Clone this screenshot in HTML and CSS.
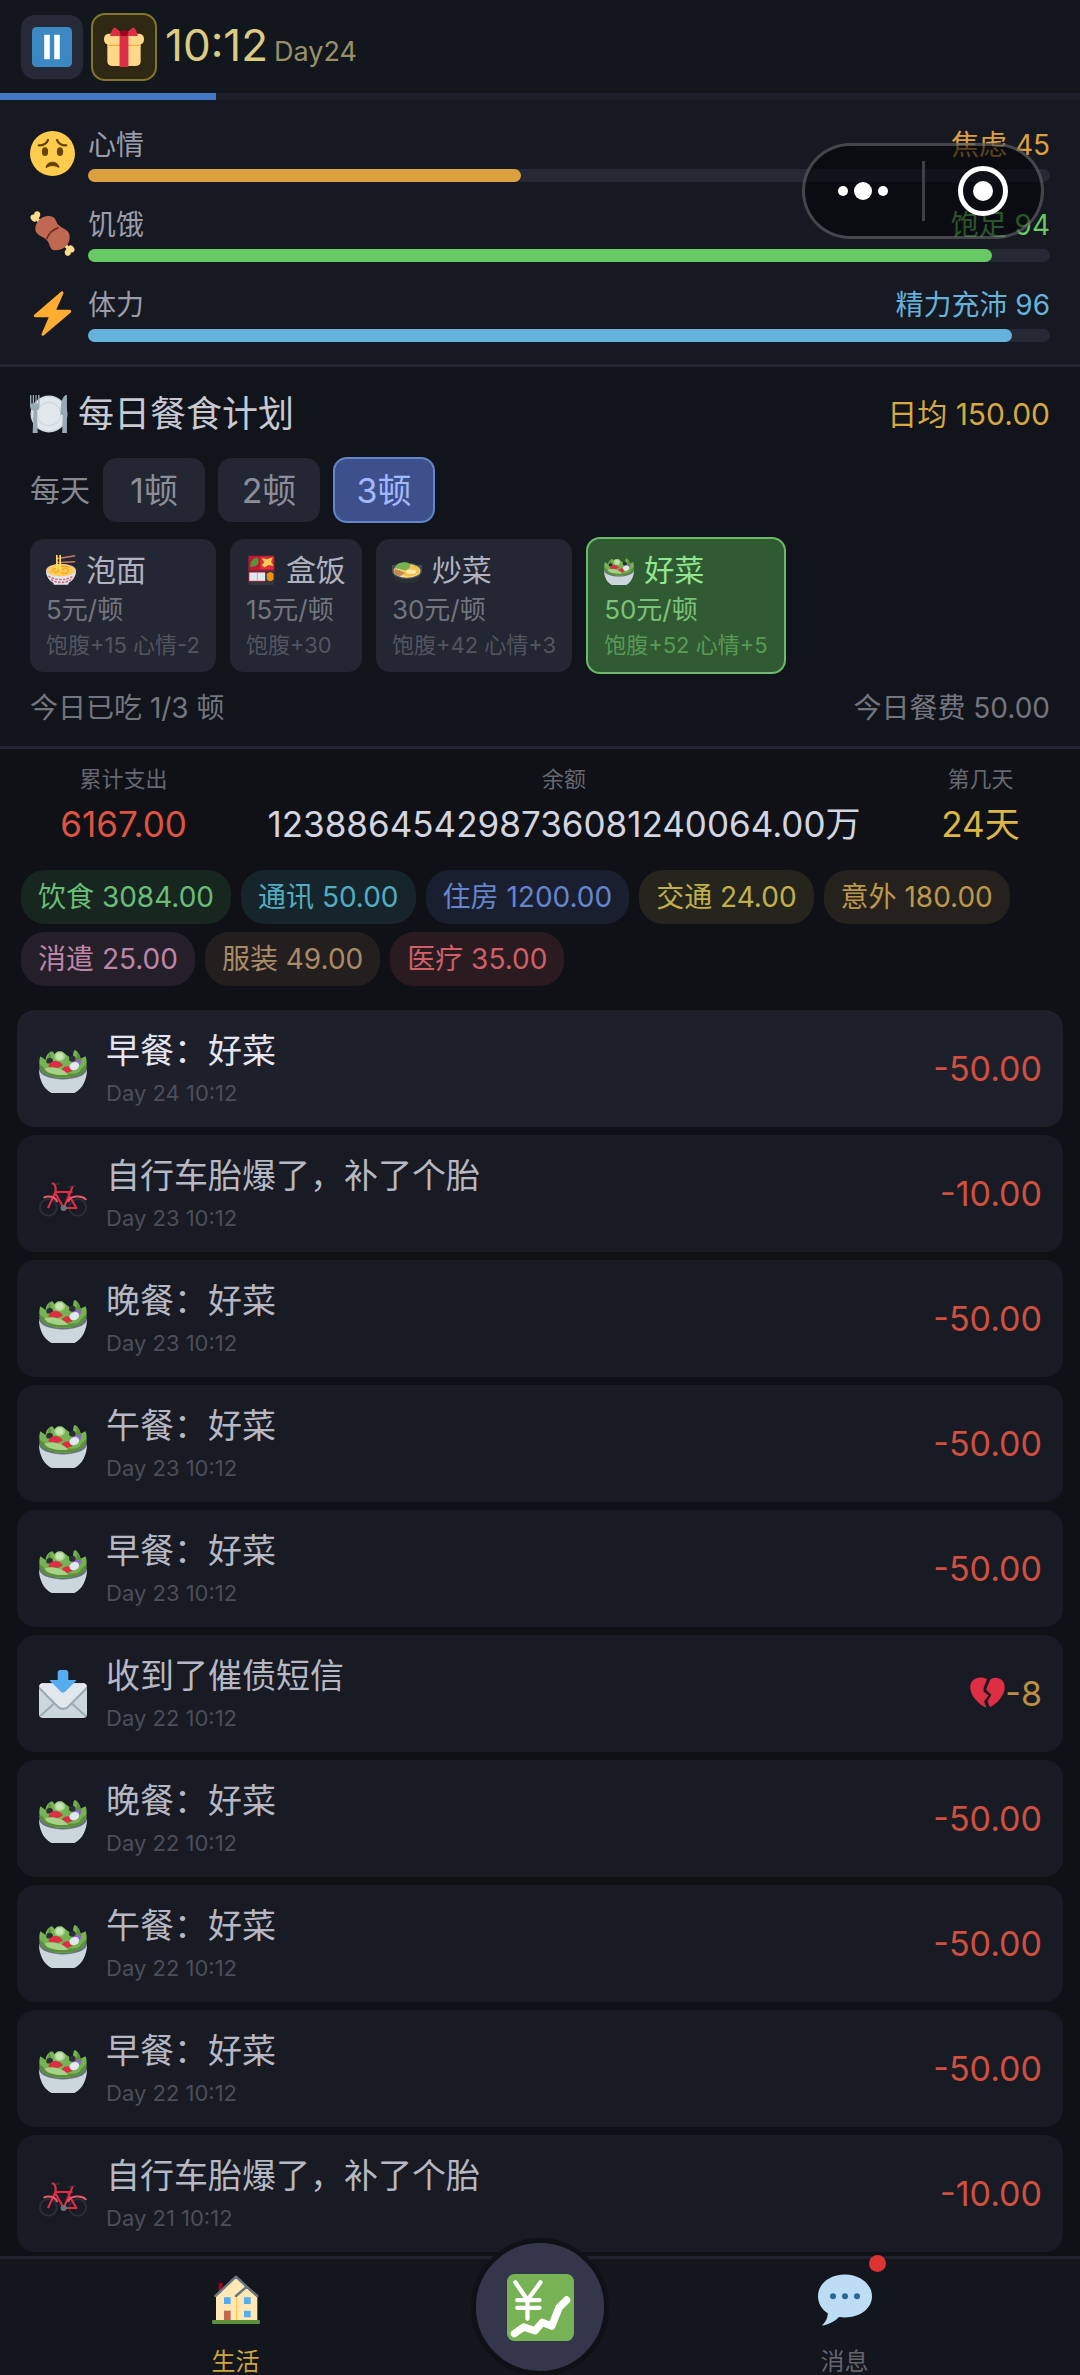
FILE: index.html
```html
<!DOCTYPE html>
<html lang="zh-CN">
<head>
<meta charset="utf-8">
<meta name="viewport" content="width=device-width, initial-scale=1">
<title>生活</title>
<link rel="stylesheet" href="styles.css">
</head>
<body>
<svg class="sprite" aria-hidden="true">
  <symbol id="i-pause" viewBox="0 0 36 36">
    <rect width="36" height="36" rx="4" fill="#3b88c3"/>
    <rect x="11" y="7" width="5" height="22" fill="#fff"/><rect x="20" y="7" width="5" height="22" fill="#fff"/>
  </symbol>
  <symbol id="i-gift" viewBox="0 0 36 36">
    <path fill="#fdd888" d="M33 31c0 2.200-1.800 4-4 4H7c-2.200 0-4-1.800-4-4V14h30z"/>
    <rect x="0" y="6" width="36" height="10" rx="4.500" fill="#fdd888"/>
    <path fill="#fcab40" d="M3 16h30v1H3z"/>
    <path fill="#da2f47" d="M14 5h8v31h-8z"/>
    <path fill="#da2f47" d="M18 7L10 .5C8.500-.5 6 5 5.500 8H14zM18 7l8-6.500C27.500-.5 30 5 30.500 8H22z"/>
    <path fill="#a0041e" d="M14 4.500q4-3 8 0L21 8h-6z"/>
  </symbol>
  <symbol id="i-face" viewBox="0 0 36 36">
    <circle cx="18" cy="18" r="18" fill="#ffcc4d"/>
    <ellipse cx="12" cy="16.500" rx="2.500" ry="3.500" fill="#664500"/><ellipse cx="24" cy="16.500" rx="2.500" ry="3.500" fill="#664500"/>
    <path fill="#664500" d="M23.500 28.600C23.400 28.300 22.300 24.500 18 24.500s-5.400 3.800-5.500 4.100c-.2.700.4 1.200 1 .8C14 29.100 15.500 28 18 28s4 1.100 4.500 1.400c.6.400 1.200-.2 1-.8z"/>
    <path fill="none" stroke="#664500" stroke-width="1.800" stroke-linecap="round" d="M7 11.500c3.500.1 6.200-1.400 7.400-4.300M29 11.500c-3.500.1-6.200-1.400-7.400-4.300"/>
  </symbol>
  <symbol id="i-meat" viewBox="0 0 36 36">
    <path stroke="#ffdc8d" stroke-width="3" d="M4 5l28 26"/>
    <path fill="#ffdc8d" d="M.7 6.200C-.4 4.200 1.400 2.300 3.300 3 3 .8 5.300-.5 7 .5c1.700 1 1.300 3.200.7 4.200L4.600 8.300C3.300 9 1.500 8 .7 6.200zM35.300 29.800c1.100 2-.7 3.900-2.600 3.200.3 2.200-2 3.500-3.700 2.500-1.700-1-1.300-3.200-.7-4.200l3.100-3.600c1.300-.7 3.100.3 3.900 2.100z"/>
    <path fill="#bf6952" d="M6.500 8C9 4.500 14 3 18 4.500c2.600 1 2.600 3.700 4.500 6.300 2.300 3 7 3.500 8.500 6.700 1.300 3 .8 7-1.500 9.800-2.500 3-6.800 4.500-10.500 4-3-.5-3-4.500-4.800-7.200C12 21 6.700 20 5 17c-1.600-3-.4-6.500 1.500-9z"/>
    <path d="M13.500 22c1.500-4 4.500-7 9-8.500" stroke="#6f2b22" stroke-width="1.300" fill="none" stroke-linecap="round"/>
  </symbol>
  <symbol id="i-bolt" viewBox="0 0 36 36">
    <path fill="#ffac33" d="M32.900 15.700c-.2-.5-.6-.8-1.100-.8H21L26.700 1.900c.2-.5.1-1.100-.4-1.400-.5-.4-1.100-.3-1.500.1L3.400 18.900c-.3.300-.5.800-.3 1.300.2.400.6.700 1.100.7H15L9.300 34.100c-.2.500-.1 1.100.4 1.400.4.300 1 .3 1.500-.1l21.400-18.300c.3-.4.500-.9.300-1.400z"/>
  </symbol>
  <symbol id="i-plate" viewBox="0 0 36 36">
    <circle cx="18" cy="18" r="17.500" fill="#ccd6dd"/><circle cx="18" cy="18" r="16" fill="#e1e8ed"/>
    <circle cx="18" cy="18" r="11" fill="#e1e8ed" stroke="#ccd6dd" stroke-width="1"/>
    <path fill="#99aab5" d="M0 0h1.300v8h1.300V0h1.200v8h1.300V0h1.200v8h1.300V0H9v10c0 3-1 4-2.500 5l.8 21H2.500l.8-21C1 14 0 13 0 10zM34 0c-4 2-5 8-5 19h2l-.5 17H35V0z"/>
  </symbol>
  <symbol id="i-noodle" viewBox="0 0 36 36">
    <path stroke="#c97c62" stroke-width="1.800" d="M13 4.500L35 1M13 9l22-1"/>
    <ellipse cx="18" cy="19" rx="18" ry="8.500" fill="#f4c7b3"/>
    <path fill="#e1e8ed" d="M0 19c0 7 4 12 9 14.500V35c0 1 18 1 18 0v-1.500C32 31 36 26 36 19c-3 9-33 9-36 0z"/>
    <path stroke="#dd6b80" stroke-width="2" stroke-dasharray="3 1.500" fill="none" d="M3 25c7 6 23 6 30 0M6 29.500c7 4.500 17 4.500 24 0"/>
    <ellipse cx="18" cy="18.500" rx="15.500" ry="7" fill="#ffcc4d"/>
    <path fill="none" stroke="#f19020" stroke-width="1.200" d="M7 20c0-5 9-4 8-1s-6 2-5 0M18 21c6 3 11-1 8-4s-8 0-5 2M17 14c3-1 8-1 11 1"/>
    <path stroke="#ffdc5d" stroke-width="2" d="M13 0v18M17 0v18"/>
  </symbol>
  <symbol id="i-bento" viewBox="0 0 36 36">
    <rect x="3" y="3" width="31" height="33" rx="2" fill="#31373d"/>
    <path fill="#be1931" d="M3 1h31v18H3zM3 20h20v12H3z"/><path fill="#dd2e44" d="M17 2h16v15H17z"/>
    <path fill="#e1e8ed" d="M4 21h19v10H4z"/><path fill="#99aab5" d="M13 21h1v10h-1z"/>
    <path fill="#5c913b" d="M5 14c0-7 4-11 9-11 3 5 1 12-9 11z"/>
    <path fill="#ffcc4d" d="M19 4l6 1 7-2-2 5 3 5-6-1-5 3-3-3 3-3z"/>
    <path fill="#f4900c" d="M25 23c2-3 6-3 8 0v6c-2 3-6 3-8 0z"/>
  </symbol>
  <symbol id="i-pan" viewBox="0 0 36 36">
    <g transform="translate(0 5) scale(1 .88)">
    <path fill="#292f33" d="M1 17h34c0 9-4 16-10 16H11C5 33 1 26 1 17z"/>
    <path fill="#414b51" d="M0 8h5v6H0zM31 8h5v6h-5z"/>
    <ellipse cx="18" cy="16" rx="18" ry="11" fill="#4b575f"/>
    <ellipse cx="18" cy="16" rx="16" ry="9.500" fill="#ffd983"/>
    <path fill="#f4c04e" d="M16 11c6-5 18-2 17 5s-17 9-19 6z"/>
    <path fill="#c1894f" d="M3 14c3-1 6 2 12 4-1 4-5 6-9 4-3-2-4-5-3-8z"/>
    <path fill="#77b255" d="M4 10C7 4 16 3 21 6c2 4 0 8-5 9C12 16 7 12 4 13z"/>
    <ellipse cx="23" cy="17" rx="6" ry="3" fill="#ffe8b6"/>
    </g>
  </symbol>
  <symbol id="i-salad" viewBox="0 0 36 36">
    <g transform="translate(0 2) scale(1 .92)">
    <path fill="#77b255" d="M1 18C0 13 0 10 1 7l4 3c0-4 3-7 5-7l3 4 4-4 5 4 4 3c-1-4 0-8 1-8 3 2 4 5 4 7l4-2c1 3 1 7 0 11-5 10-30 9-34 0z"/>
    <path fill="#5c913b" d="M8 4c1 3 2 6 1 10l-3-4zM28 2c1 4 0 8-2 10l3 4 3-6zM1 14l7 6 20 1 7-7v5l-5 5H6l-5-5z"/>
    <circle cx="8" cy="11" r="2.500" fill="#292f33"/><circle cx="25" cy="9" r="2.500" fill="#292f33"/>
    <path fill="#77b255" d="M5 13h26v8H5z"/>
    <circle cx="15.500" cy="7" r="4" fill="#a6d388"/><circle cx="15.500" cy="7" r="2.700" fill="#c6e5b3"/>
    <path fill="#dd2e44" d="M7 15.500c1-5.500 8-6.500 11-1l-4 2zM17 18c2-4 7-4 8 1l-5 2z"/>
    <path fill="#9266cc" d="M24 14c2-4 6-5 8-2.500l-2 4z"/><ellipse cx="26.500" cy="15" rx="3.800" ry="3.200" fill="#e1e8ed" transform="rotate(-30 26.500 15)"/>
    <path fill="#a6d388" d="M4 17c6-2 14 0 18 5-7 1-15 0-18-5z"/>
    <path fill="none" stroke="#5c913b" stroke-width="2" d="M1 15c3 11.500 31 11.500 34 0"/>
    <path fill="none" stroke="#66757f" stroke-width="1.500" d="M.5 17c3 11.500 32 11.500 35 0"/>
    <path fill="#ccd6dd" d="M0 18c3 10.500 33 10.500 36 0 0 9-5 20-14 20h-8C5 38 0 27 0 18z"/>
    </g>
  </symbol>
  <symbol id="i-bike" viewBox="0 0 36 36">
    <g transform="translate(0 3)">
    <circle cx="7" cy="25" r="6.300" fill="none" stroke="#292f33" stroke-width="1.500"/><circle cx="29" cy="25" r="6.300" fill="none" stroke="#292f33" stroke-width="1.500"/>
    <path fill="none" stroke="#292f33" stroke-width="1.500" stroke-linecap="round" d="M9 7l3 1 3-1M22 10l5-1"/>
    <path fill="none" stroke="#dd2e44" stroke-width="1.600" stroke-linecap="round" stroke-linejoin="round" d="M10.500 7c2 1 2 3 2 6L7 25M12 13.500h12.500M12 14l6.500 11.500L25 10M22 15l6 10.500H18.500"/>
    <path fill="none" stroke="#ea596e" stroke-width="1.500" stroke-linecap="round" d="M4 17.500c3-1.500 8-.5 9.500 3M22 20.500c1-4 10-5 13-1.500"/>
    <circle cx="18.500" cy="25.500" r="2.300" fill="#66757f"/>
    </g>
  </symbol>
  <symbol id="i-mail" viewBox="0 0 36 36">
    <rect y="10" width="36" height="26" rx="3" fill="#ccd6dd"/>
    <path fill="none" stroke="#99aab5" stroke-width="1.500" d="M1 34.500l11-10M35 34.500l-11-10"/>
    <path fill="#99aab5" d="M0 12l14.500 15c2 2 5 2 7 0L36 12v2.500L22 28.500c-2.200 2-5.800 2-8 0L0 14.500z"/>
    <path fill="#e1e8ed" d="M3 10h30c2 0 3 1.500 2.500 2.500L21.500 26.500c-2 2-5 2-7 0L.5 12.500C0 11.500 1 10 3 10z"/>
    <path fill="#55acee" d="M14 2c0-1.200.8-2 2-2h4c1.200 0 2 .8 2 2v5.500h5c1 0 1 .5.500 1L20 16c-1.300 1.300-2.700 1.300-4 0L8.500 8.500C8 8 8 7.500 9 7.500h5z"/>
  </symbol>
  <symbol id="i-broken" viewBox="0 0 36 36">
    <path fill="#dd2e44" d="M14 12l3.500-8.500C14 .5 6 1 2.800 4.500-2 10 .5 18 5 23.500c4 5 8.500 8 12 9.500l-2.500-7 4.500-6-5-4zM20.500 4C24 .500 31 1.500 33.800 5.500 38 12 34.500 19 31 23.500c-4 5-7.500 7.500-10.500 8.500L18 26l4-6.500-5.500-5.500z"/>
  </symbol>
  <symbol id="i-house" viewBox="0 0 36 38">
    <path fill="#a0041e" d="M5 6h3v9H5z"/>
    <path fill="#ffe8b6" d="M3 15L18 1l9 10 7 6v17H3z"/>
    <path fill="#ffcc4d" d="M18 17h1v17h-1z"/>
    <path fill="none" stroke="#66757f" stroke-width="1.800" stroke-linejoin="round" stroke-linecap="round" d="M2.500 16L18 1.500l8 7.500M18 16l8-7 8 7"/>
    <path fill="#55acee" d="M9 17h5v5H9zM24 17h5v5h-5zM24 27h5v5h-5z"/><path fill="#c1694f" d="M9 27h5v8H9z"/>
    <rect y="34" width="36" height="3" rx="1" fill="#5c913b"/>
  </symbol>
  <symbol id="i-chart" viewBox="0 0 36 36">
    <rect width="36" height="36" rx="4" fill="#77b255"/>
    <path fill="none" stroke="#fff" stroke-width="2.300" stroke-linecap="round" stroke-linejoin="round" d="M4.500 4.500L11 14l7-9.500M11 14v10M5.500 14h12M5.500 18.200h12"/>
    <path fill="none" stroke="#fff" stroke-width="4" stroke-linecap="round" stroke-linejoin="round" d="M4 32l5-3.500 6 2L19 26l5 2 4-10 4-4"/>
  </symbol>
  <symbol id="i-chat" viewBox="0 0 36 36">
    <path fill="#bdddf4" d="M18 1C8 1 0 7 0 15.500c0 4.700 2.500 8.700 6.500 11.400C6.500 30 5 33 2.500 35c4.500-.5 9-3 11.500-5.700 1.300.2 2.600.3 4 .3 10 0 18-6 18-14.100S28 1 18 1z"/>
    <circle cx="10" cy="15.500" r="2" fill="#2a6797"/><circle cx="18" cy="15.500" r="2" fill="#2a6797"/><circle cx="26" cy="15.500" r="2" fill="#2a6797"/>
  </symbol>
</svg>

<header class="topbar">
  <button class="tool" type="button" aria-label="暂停"><svg class="tool-icon"><use href="#i-pause"/></svg></button>
  <button class="tool tool-gift" type="button" aria-label="礼物"><svg class="tool-icon"><use href="#i-gift"/></svg></button>
  <div class="clock"><span class="time">10:12</span><span class="day">Day24</span></div>
</header>
<div class="dayline"><div class="dayline-fill" style="width:20%"></div></div>

<div class="capsule">
  <button class="cap-btn" type="button" aria-label="更多">
    <svg class="dots" viewBox="0 0 52 20"><circle cx="6" cy="10" r="5"/><circle cx="26" cy="10" r="9"/><circle cx="46" cy="10" r="5"/></svg>
  </button>
  <span class="cap-line"></span>
  <button class="cap-btn" type="button" aria-label="关闭">
    <svg class="target" viewBox="0 0 50 50"><circle cx="25" cy="25" r="22.500" fill="none" stroke="#fff" stroke-width="5"/><circle cx="25" cy="25" r="10"/></svg>
  </button>
</div>

<main>
  <section class="stats">
    <div class="stat mood">
      <svg class="stat-icon"><use href="#i-face"/></svg>
      <div class="stat-body">
        <div class="stat-head"><span>心情</span><span class="stat-value">焦虑 45</span></div>
        <div class="track"><div class="fill" style="width:45%"></div></div>
      </div>
    </div>
    <div class="stat hunger">
      <svg class="stat-icon"><use href="#i-meat"/></svg>
      <div class="stat-body">
        <div class="stat-head"><span>饥饿</span><span class="stat-value">饱足 94</span></div>
        <div class="track"><div class="fill" style="width:94%"></div></div>
      </div>
    </div>
    <div class="stat energy">
      <svg class="stat-icon"><use href="#i-bolt"/></svg>
      <div class="stat-body">
        <div class="stat-head"><span>体力</span><span class="stat-value">精力充沛 96</span></div>
        <div class="track"><div class="fill" style="width:96%"></div></div>
      </div>
    </div>
  </section>

  <section class="plan">
    <div class="plan-head">
      <h2><svg class="plate"><use href="#i-plate"/></svg>每日餐食计划</h2>
      <span class="average">日均 150.00</span>
    </div>
    <div class="times">
      <span class="times-label">每天</span>
      <button class="times-btn" type="button">1顿</button>
      <button class="times-btn" type="button">2顿</button>
      <button class="times-btn times-on" type="button">3顿</button>
    </div>
    <div class="meals">
      <button class="meal" type="button">
        <span class="meal-name"><svg class="meal-icon"><use href="#i-noodle"/></svg>泡面</span>
        <span class="meal-price">5元/顿</span><span class="meal-effect">饱腹+15 心情-2</span>
      </button>
      <button class="meal" type="button">
        <span class="meal-name"><svg class="meal-icon"><use href="#i-bento"/></svg>盒饭</span>
        <span class="meal-price">15元/顿</span><span class="meal-effect">饱腹+30</span>
      </button>
      <button class="meal" type="button">
        <span class="meal-name"><svg class="meal-icon"><use href="#i-pan"/></svg>炒菜</span>
        <span class="meal-price">30元/顿</span><span class="meal-effect">饱腹+42 心情+3</span>
      </button>
      <button class="meal meal-on" type="button">
        <span class="meal-name"><svg class="meal-icon"><use href="#i-salad"/></svg>好菜</span>
        <span class="meal-price">50元/顿</span><span class="meal-effect">饱腹+52 心情+5</span>
      </button>
    </div>
    <div class="plan-foot"><span>今日已吃 1/3 顿</span><span>今日餐费 50.00</span></div>
  </section>

  <section class="totals">
    <div class="total"><span class="total-label">累计支出</span><span class="total-value spent">6167.00</span></div>
    <div class="total"><span class="total-label">余额</span><span class="total-value">123886454298736081240064.00万</span></div>
    <div class="total"><span class="total-label">第几天</span><span class="total-value days">24天</span></div>
  </section>

  <ul class="chips">
    <li class="chip food">饮食 3084.00</li>
    <li class="chip phone">通讯 50.00</li>
    <li class="chip home">住房 1200.00</li>
    <li class="chip travel">交通 24.00</li>
    <li class="chip accident">意外 180.00</li>
    <li class="chip fun">消遣 25.00</li>
    <li class="chip clothes">服装 49.00</li>
    <li class="chip medical">医疗 35.00</li>
  </ul>

  <ul class="log">
    <li class="entry latest"><svg class="entry-icon"><use href="#i-salad"/></svg><div class="entry-text"><span class="entry-title">早餐：好菜</span><span class="entry-date">Day 24 10:12</span></div><span class="amount">-50.00</span></li>
    <li class="entry"><svg class="entry-icon"><use href="#i-bike"/></svg><div class="entry-text"><span class="entry-title">自行车胎爆了，补了个胎</span><span class="entry-date">Day 23 10:12</span></div><span class="amount">-10.00</span></li>
    <li class="entry"><svg class="entry-icon"><use href="#i-salad"/></svg><div class="entry-text"><span class="entry-title">晚餐：好菜</span><span class="entry-date">Day 23 10:12</span></div><span class="amount">-50.00</span></li>
    <li class="entry"><svg class="entry-icon"><use href="#i-salad"/></svg><div class="entry-text"><span class="entry-title">午餐：好菜</span><span class="entry-date">Day 23 10:12</span></div><span class="amount">-50.00</span></li>
    <li class="entry"><svg class="entry-icon"><use href="#i-salad"/></svg><div class="entry-text"><span class="entry-title">早餐：好菜</span><span class="entry-date">Day 23 10:12</span></div><span class="amount">-50.00</span></li>
    <li class="entry"><svg class="entry-icon"><use href="#i-mail"/></svg><div class="entry-text"><span class="entry-title">收到了催债短信</span><span class="entry-date">Day 22 10:12</span></div><span class="amount mood-loss"><svg class="heart"><use href="#i-broken"/></svg>-8</span></li>
    <li class="entry"><svg class="entry-icon"><use href="#i-salad"/></svg><div class="entry-text"><span class="entry-title">晚餐：好菜</span><span class="entry-date">Day 22 10:12</span></div><span class="amount">-50.00</span></li>
    <li class="entry"><svg class="entry-icon"><use href="#i-salad"/></svg><div class="entry-text"><span class="entry-title">午餐：好菜</span><span class="entry-date">Day 22 10:12</span></div><span class="amount">-50.00</span></li>
    <li class="entry"><svg class="entry-icon"><use href="#i-salad"/></svg><div class="entry-text"><span class="entry-title">早餐：好菜</span><span class="entry-date">Day 22 10:12</span></div><span class="amount">-50.00</span></li>
    <li class="entry"><svg class="entry-icon"><use href="#i-bike"/></svg><div class="entry-text"><span class="entry-title">自行车胎爆了，补了个胎</span><span class="entry-date">Day 21 10:12</span></div><span class="amount">-10.00</span></li>
  </ul>
</main>

<nav class="tabs">
  <a class="tab tab-on" href="#life"><svg class="tab-icon"><use href="#i-house"/></svg>生活</a>
  <a class="market" href="#market" aria-label="行情"><svg class="market-icon"><use href="#i-chart"/></svg></a>
  <a class="tab" href="#messages"><span class="tab-badge"><svg class="tab-icon"><use href="#i-chat"/></svg></span>消息</a>
</nav>
</body>
</html>
```
FILE: styles.css
```css
* { box-sizing: border-box; }

body {
  margin: 0;
  min-height: 100vh;
  display: flex;
  flex-direction: column;
  position: relative;
  background: #0f1116;
  color: #d3d5e0;
  font-family: Inter, "Noto Sans CJK SC", sans-serif;
  font-size: 28px;
}

main { flex: 1; }
button { font: inherit; color: inherit; border: 0; padding: 0; background: none; }
ul { list-style: none; margin: 0; padding: 0; }
a { color: inherit; text-decoration: none; }
svg { display: block; flex: none; }
.sprite { position: absolute; width: 0; height: 0; }

/* Top bar */
.topbar {
  display: flex;
  align-items: center;
  gap: 8px;
  height: 93px;
  padding: 0 21px;
  background: #12161d;
}
.tool {
  display: grid;
  place-items: center;
  width: 62px;
  height: 64px;
  border-radius: 14px;
  background: #262937;
}
.tool-gift {
  width: 66px;
  height: 68px;
  border: 2px solid #82742d;
  background: #2f2914;
}
.tool-icon { width: 40px; height: 40px; }
.clock { display: flex; align-items: baseline; gap: 6px; padding-top: 4px; color: #dccb83; line-height: 60px; }
.time { font-size: 44px; }
.day { font-size: 27px; color: #99906a; }

.dayline { height: 7px; background: #1d1f2b; }
.dayline-fill { height: 100%; background: #4479c8; }

/* Mini-program capsule floating over the page */
.capsule {
  position: absolute;
  top: 143px;
  right: 36px;
  z-index: 2;
  display: flex;
  align-items: center;
  width: 242px;
  height: 96px;
  border: 3px solid rgba(255, 255, 255, .24);
  border-radius: 48px;
  background: rgba(5, 5, 8, .6);
}
.cap-btn { flex: 1; display: grid; place-items: center; }
.cap-line { width: 3px; height: 60px; background: #3f4045; }
.dots { width: 52px; height: 20px; fill: #fff; }
.target { width: 50px; height: 50px; fill: #fff; }

/* Status bars */
.stats {
  display: flex;
  flex-direction: column;
  gap: 26px;
  padding: 28px 30px 22px;
  border-bottom: 3px solid #242733;
  background: #161822;
}
.stat { display: flex; align-items: flex-start; gap: 13px; }
.stat-icon { width: 45px; height: 45px; margin-top: 3px; }
.stat-body { flex: 1; }
.stat-head { display: flex; justify-content: space-between; margin-bottom: 7px; line-height: 34px; color: #9b9dab; }
.track { height: 13px; border-radius: 7px; background: #262935; }
.fill { height: 100%; border-radius: 7px; background: currentColor; }
.mood .fill, .mood .stat-value { color: #dca13f; }
.hunger .fill, .hunger .stat-value { color: #67ca64; }
.energy .fill, .energy .stat-value { color: #65b3db; }

/* Meal plan */
.plan { padding: 23px 30px 20px; border-bottom: 3px solid #242733; background: #11141b; }
.plan-head { display: flex; justify-content: space-between; align-items: center; line-height: 48px; }
.plan-head h2 { display: flex; align-items: center; gap: 10px; margin: 0; font-size: 36px; font-weight: 400; color: #c8cad3; }
.plate { width: 38px; height: 38px; }
.average { font-size: 30px; color: #d6a83f; }
.times { display: flex; align-items: center; gap: 13px; margin-top: 19px; }
.times-label { font-size: 30px; line-height: 40px; color: #85888f; }
.times-btn { width: 102px; height: 64px; padding-bottom: 4px; border-radius: 14px; background: #232633; color: #8b8e99; font-size: 34px; }
.times-on { height: 66px; border: 2px solid #6385c9; background: #3e508b; color: #a3b9ff; }
.meals { display: flex; align-items: center; gap: 14px; margin-top: 14px; }
.meal {
  display: flex;
  flex-direction: column;
  align-items: flex-start;
  padding: 10px 16px 11px;
  border-radius: 14px;
  background: #232633;
  color: #b0b2bf;
  text-align: left;
}
.meal-name { display: flex; align-items: center; gap: 10px; font-size: 30px; line-height: 42px; }
.meal-icon { width: 30px; height: 30px; }
.meal-price { font-size: 26px; line-height: 38px; color: #72757f; }
.meal-effect { font-size: 22px; line-height: 32px; color: #53555f; }
.meal-on { border: 2px solid #6cba6a; background: #305a32; color: #93e690; }
.meal-on .meal-price { color: #7dc27b; }
.meal-on .meal-effect { color: #5a9a58; }
.plan-foot { display: flex; justify-content: space-between; margin-top: 16px; line-height: 36px; color: #73767f; }

/* Totals */
.totals { display: flex; justify-content: space-around; padding: 15px 20px 22px; }
.total { display: flex; flex-direction: column; align-items: center; gap: 6px; }
.total-label { font-size: 22px; line-height: 30px; color: #666872; }
.total-value { font-size: 35px; line-height: 48px; }
.spent { color: #df5341; }
.days { color: #dfb644; }

/* Spending categories */
.chips { display: flex; flex-wrap: wrap; gap: 8px 10px; padding: 0 21px; }
.chip { padding: 0 17px; border-radius: 24px; line-height: 54px; }
.food { background: #182620; color: #68bd78; }
.phone { background: #16242b; color: #53adc0; }
.home { background: #1a1f30; color: #6685ce; }
.travel { background: #25251d; color: #c0b04c; }
.accident { background: #25221d; color: #bd984c; }
.fun { background: #251f2a; color: #bd86a9; }
.clothes { background: #231f1f; color: #aa8b66; }
.medical { background: #291b20; color: #cf6068; }

/* Event log */
.log { display: flex; flex-direction: column; gap: 8px; padding: 24px 17px 4px; }
.entry {
  display: flex;
  align-items: center;
  gap: 19px;
  height: 117px;
  padding: 0 21px 0 22px;
  border-radius: 18px;
  background: #181a24;
  color: #b6b8c3;
}
.latest { background: #1d1f2b; color: #e4e5f0; }
.entry-icon { width: 48px; height: 48px; }
.entry-text { flex: 1; display: flex; flex-direction: column; }
.entry-title { font-size: 34px; line-height: 48px; }
.entry-date { font-size: 22px; line-height: 36px; color: #4c4e59; }
.amount { display: flex; align-items: center; font-size: 34px; color: #cf503e; }
.mood-loss { color: #bd8e45; }
.heart { width: 35px; height: 35px; }

/* Bottom navigation */
.tabs {
  display: flex;
  height: 119px;
  border-top: 3px solid #20232d;
  background: #13161d;
}
.tab {
  flex: 1;
  display: flex;
  flex-direction: column;
  align-items: center;
  gap: 21px;
  padding-top: 14px;
  font-size: 24px;
  line-height: 28px;
  color: #62656f;
}
.tab-on { color: #cfa53d; }
.tab-icon { width: 48px; height: 54px; }
.tab-badge { position: relative; }
.tab-badge .tab-icon { width: 56px; }
.tab-badge::after {
  content: "";
  position: absolute;
  top: -18px;
  right: -13px;
  width: 17px;
  height: 17px;
  border-radius: 50%;
  background: #dd3333;
}
.market {
  display: grid;
  place-items: center;
  width: 138px;
  height: 138px;
  margin-top: -21px;
  border: 5px solid #0f1116;
  border-radius: 50%;
  background: #34374b;
}
.market-icon { width: 67px; height: 67px; }
```
